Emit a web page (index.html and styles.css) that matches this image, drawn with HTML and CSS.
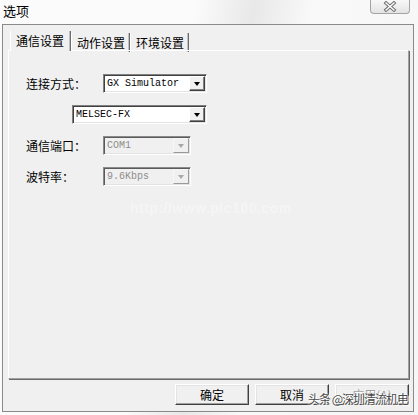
FILE: index.html
```html
<!DOCTYPE html>
<html>
<head>
  <title>选项</title>
  <meta charset="UTF-8" />
  <link rel="stylesheet" href="styles.css">
</head>
<body>
  <div class="window">
    <!-- Title bar -->
    <div class="titlebar">
      <span class="title">选项</span>
      <div class="close-btn">
        <svg width="14" height="11" viewBox="0 0 14 11">
          <path d="M3 2 L11 9 M11 2 L3 9" stroke="#6f6f6f" stroke-width="3.4" stroke-linecap="square" />
          <path d="M3 2 L11 9 M11 2 L3 9" stroke="#ffffff" stroke-width="1.4" stroke-linecap="square" />
        </svg>
      </div>
    </div>

    <div class="dialog">
      <div class="tabs">
        <div class="tab active">通信设置</div>
        <div class="tab">动作设置</div>
        <div class="tab">环境设置</div>
      </div>

      <div class="tab-panel">
        <div class="form-grid">
          <label class="field-label">连接方式：</label>
          <div class="combo combo-short">
            <span class="combo-text">GX Simulator</span>
            <span class="combo-btn"><i class="arrow"></i></span>
          </div>

          <div class="combo combo-wide">
            <span class="combo-text">MELSEC-FX</span>
            <span class="combo-btn"><i class="arrow"></i></span>
          </div>

          <label class="field-label">通信端口：</label>
          <div class="combo combo-small disabled">
            <span class="combo-text">COM1</span>
            <span class="combo-btn"><i class="arrow"></i></span>
          </div>

          <label class="field-label">波特率：</label>
          <div class="combo combo-small disabled">
            <span class="combo-text">9.6Kbps</span>
            <span class="combo-btn"><i class="arrow"></i></span>
          </div>
        </div>

        <div class="ghost-text">http://www.plc100.com</div>
      </div>

      <div class="button-row">
        <button class="btn">确定</button>
        <button class="btn">取消</button>
        <button class="btn" disabled>应用(A)</button>
      </div>

      <div class="watermark">头条 @深圳清流机电</div>
    </div>
  </div>
</body>
</html>
```

FILE: styles.css
```css
body {
  margin: 0;
  font-family: "Noto Sans CJK SC", "Liberation Sans", sans-serif;
  font-size: 12px;
  color: #000;
  background: #fff;
}

.window {
  width: 418px;
  height: 415px;
  box-sizing: border-box;
  padding: 0 4px 3px 2px;
  display: flex;
  flex-direction: column;
  background: linear-gradient(100deg, #fbfbfb 0%, #fbfbfb 40%, #e8e8e8 52%, #f9f9f9 64%, #f6f6f6 100%);
}

/* Title bar */
.titlebar {
  height: 24px;
  display: flex;
  align-items: flex-start;
}

.title {
  font-size: 13px;
  line-height: 21px;
  padding-left: 1px;
}

.close-btn {
  margin-left: auto;
  margin-right: 4px;
  width: 40px;
  height: 14px;
  box-sizing: border-box;
  border: 1px solid #a4a4a4;
  border-top: none;
  border-radius: 0 0 4px 4px;
  background: linear-gradient(#f8f8f8, #e4e4e4);
  display: flex;
  justify-content: center;
  align-items: center;
}

/* Dialog client area */
.dialog {
  position: relative;
  flex: 1;
  border: 1px solid #8a8a8a;
  background: #f0f0f0;
  padding: 6px 4px 6px 5px;
  display: flex;
  flex-direction: column;
}

.tabs {
  display: flex;
  height: 19px;
  padding-left: 2px;
}

.tab {
  box-sizing: border-box;
  height: 19px;
  padding: 3px 4px 0 5px;
  line-height: 14px;
  border-left: 1px solid #fff;
  border-right: 1px solid #6c6c6c;
  box-shadow: inset -1px 0 0 #c0c0c0;
  margin-top: 2px;
}

.tab.active {
  margin-top: 0;
  padding: 3px 6px 0 5px;
  height: 20px;
  margin-bottom: -1px;
  background: #f0f0f0;
  position: relative;
}

.tab-panel {
  height: 329px;
  box-sizing: border-box;
  border: 1px solid;
  border-color: #ffffff #a0a0a0 #a0a0a0 #ffffff;
  box-shadow: 1px 1px 0 #6a6a6a;
  padding: 23px 0 0 17px;
}

/* Form */
.form-grid {
  display: grid;
  grid-template-columns: 46px 31px 1fr;
  row-gap: 12px;
  align-items: center;
}

.field-label {
  grid-column: 1 / 3;
  font-size: 12px;
  line-height: 14px;
}

.combo {
  box-sizing: border-box;
  height: 19px;
  display: flex;
  align-items: stretch;
  background: #fff;
  border: 1px solid;
  border-color: #808080 #ffffff #ffffff #808080;
  box-shadow: inset 1px 1px 0 #404040, inset -1px -1px 0 #e3e3e3;
  padding: 1px;
}

.combo-short {
  grid-column: 3;
  width: 104px;
}

.combo-wide {
  grid-column: 2 / 4;
  width: 135px;
}

.combo-small {
  grid-column: 3;
  width: 88px;
}

.combo-text {
  flex: 1;
  font-family: "Liberation Mono", monospace;
  font-size: 10px;
  line-height: 15px;
  padding-left: 2px;
}

.combo-btn {
  width: 16px;
  box-sizing: border-box;
  background: #f0f0f0;
  border: 1px solid;
  border-color: #ffffff #404040 #404040 #ffffff;
  box-shadow: inset -1px -1px 0 #808080;
  display: flex;
  justify-content: center;
  align-items: center;
}

.arrow {
  width: 0;
  height: 0;
  border-left: 3.5px solid transparent;
  border-right: 3.5px solid transparent;
  border-top: 4px solid #000;
  margin-top: 1px;
}

.combo.disabled {
  background: #f0f0f0;
  border-color: #8a8a8a #ffffff #ffffff #8a8a8a;
  box-shadow: inset 1px 1px 0 #5a5a5a, inset -1px -1px 0 #e3e3e3;
}

.combo.disabled .combo-text {
  color: #8d8d8d;
}

.combo.disabled .combo-btn {
  border-color: #f7f7f7 #9a9a9a #9a9a9a #f7f7f7;
  box-shadow: none;
}

.combo.disabled .arrow {
  border-top-color: #a8a8a8;
}

.ghost-text {
  margin: 14px 0 0 104px;
  font-family: "Liberation Sans", sans-serif;
  font-size: 14px;
  font-weight: bold;
  color: #f5f5f5;
  letter-spacing: 0.5px;
}

/* Buttons */
.button-row {
  display: flex;
  justify-content: flex-end;
  gap: 6px;
  margin-top: 5px;
}

.btn {
  width: 74px;
  height: 21px;
  padding: 0;
  font-family: "Noto Sans CJK SC", sans-serif;
  font-size: 12px;
  background: #f0f0f0;
  color: #000;
  border: 1px solid;
  border-color: #ffffff #404040 #404040 #ffffff;
  box-shadow: inset -1px -1px 0 #a0a0a0, inset 1px 1px 0 #e3e3e3;
}

.btn:disabled {
  color: #a0a0a0;
  text-shadow: 1px 1px 0 #fff;
}

.watermark {
  position: absolute;
  right: 5px;
  bottom: 4px;
  font-size: 12px;
  line-height: 16px;
  letter-spacing: -1px;
  color: #4a4a4a;
  text-shadow: 0 0 2px #fff, 0 0 2px #fff, 1px 1px 0 #fff;
}
```
